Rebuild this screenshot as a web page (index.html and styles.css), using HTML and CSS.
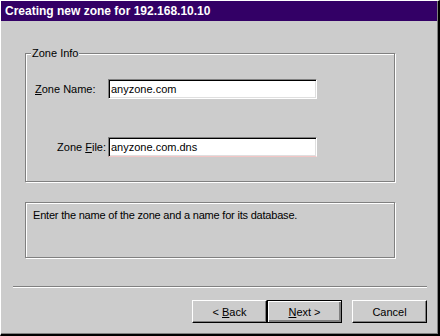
FILE: index.html
```html
<!DOCTYPE html>
<html lang="en">
<head>
    <meta charset="UTF-8">
    <title>Creating new zone</title>
    <link rel="stylesheet" href="styles.css">
</head>
<body>
    <div class="window">
        <div class="titlebar">Creating new zone for 192.168.10.10</div>

        <div class="dialog-body">
            <fieldset class="group">
                <legend>Zone Info</legend>

                <div class="field-row">
                    <label class="field-label" for="zoneName"><u>Z</u>one Name:</label>
                    <input class="text-input" id="zoneName" type="text" value="anyzone.com">
                </div>

                <div class="field-row field-row-second">
                    <label class="field-label field-label-right" for="zoneFile">Zone <u>F</u>ile:</label>
                    <input class="text-input text-input-file" id="zoneFile" type="text" value="anyzone.com.dns">
                </div>
            </fieldset>

            <div class="description">Enter the name of the zone and a name for its database.</div>

            <div class="separator"></div>

            <div class="button-row">
                <button class="btn">&lt; <u>B</u>ack</button>
                <button class="btn btn-default"><u>N</u>ext &gt;</button>
                <button class="btn btn-cancel">Cancel</button>
            </div>
        </div>
    </div>
</body>
</html>
```

FILE: styles.css
```css
:root {
    --face-color: #cccccc;
    --shadow-color: #808080;
    --title-color: #330066;
}

* {
    margin: 0;
    padding: 0;
    box-sizing: border-box;
}

body {
    background-color: var(--face-color);
    font-family: 'Liberation Sans', Arial, sans-serif;
    font-size: 11px;
    color: #000;
}

.window {
    width: 440px;
    height: 336px;
    background-color: var(--face-color);
    border-top: 1px solid #fff;
    border-left: 1px solid #fff;
    border-right: 2px solid #000;
    border-bottom: 2px solid #000;
    box-shadow: inset -1px -1px 0 var(--shadow-color);
}

.titlebar {
    height: 20px;
    margin-right: 1px;
    padding-left: 4px;
    background-color: var(--title-color);
    color: #fff;
    font-weight: bold;
    font-size: 12px;
    line-height: 20px;
}

.dialog-body {
    padding: 0 12px;
}

/* etched frames */
.group,
.description {
    border: 1px solid var(--shadow-color);
    box-shadow: 1px 1px 0 #fff, inset 1px 1px 0 #fff;
}

.group {
    width: 370px;
    height: 135px;
    margin: 26px 0 0 12px;
    padding: 0 0 0 10px;
}

.group legend {
    margin-left: -5px;
    padding: 0 1px;
    line-height: 12px;
    background-color: var(--face-color);
}

.field-row {
    display: flex;
    align-items: center;
    margin-top: 20px;
}

.field-row-second {
    margin-top: 38px;
}

.field-label {
    width: 73px;
    padding-right: 2px;
    margin-left: -1px;
}

.field-label-right {
    text-align: right;
}

.text-input {
    width: 209px;
    height: 20px;
    padding: 0 2px;
    font-family: inherit;
    font-size: 11px;
    background-color: #fff;
    border: 1px solid;
    border-color: var(--shadow-color) #fff #fff var(--shadow-color);
    box-shadow: inset 1px 1px 0 #000, inset -1px -1px 0 #dfdfdf;
    outline: none;
}

.text-input-file {
    border-bottom-color: #f2c6c6;
}

.description {
    width: 370px;
    height: 56px;
    margin: 20px 0 0 12px;
    padding: 6px 7px;
    letter-spacing: -0.2px;
}

.separator {
    width: 414px;
    height: 2px;
    margin-top: 28px;
    border-top: 1px solid var(--shadow-color);
    border-bottom: 1px solid #fff;
}

.button-row {
    display: flex;
    justify-content: flex-end;
    width: 414px;
    margin-top: 12px;
}

.btn {
    width: 75px;
    height: 23px;
    font-family: inherit;
    font-size: 11px;
    background-color: var(--face-color);
    border: 1px solid;
    border-color: #fff #000 #000 #fff;
    box-shadow: inset -1px -1px 0 var(--shadow-color);
}

.btn-default {
    border-color: #000;
    box-shadow: inset 1px 1px 0 #fff, inset -2px -2px 0 var(--shadow-color), inset -1px -1px 0 #000;
}

.btn-cancel {
    margin-left: 10px;
}
```
